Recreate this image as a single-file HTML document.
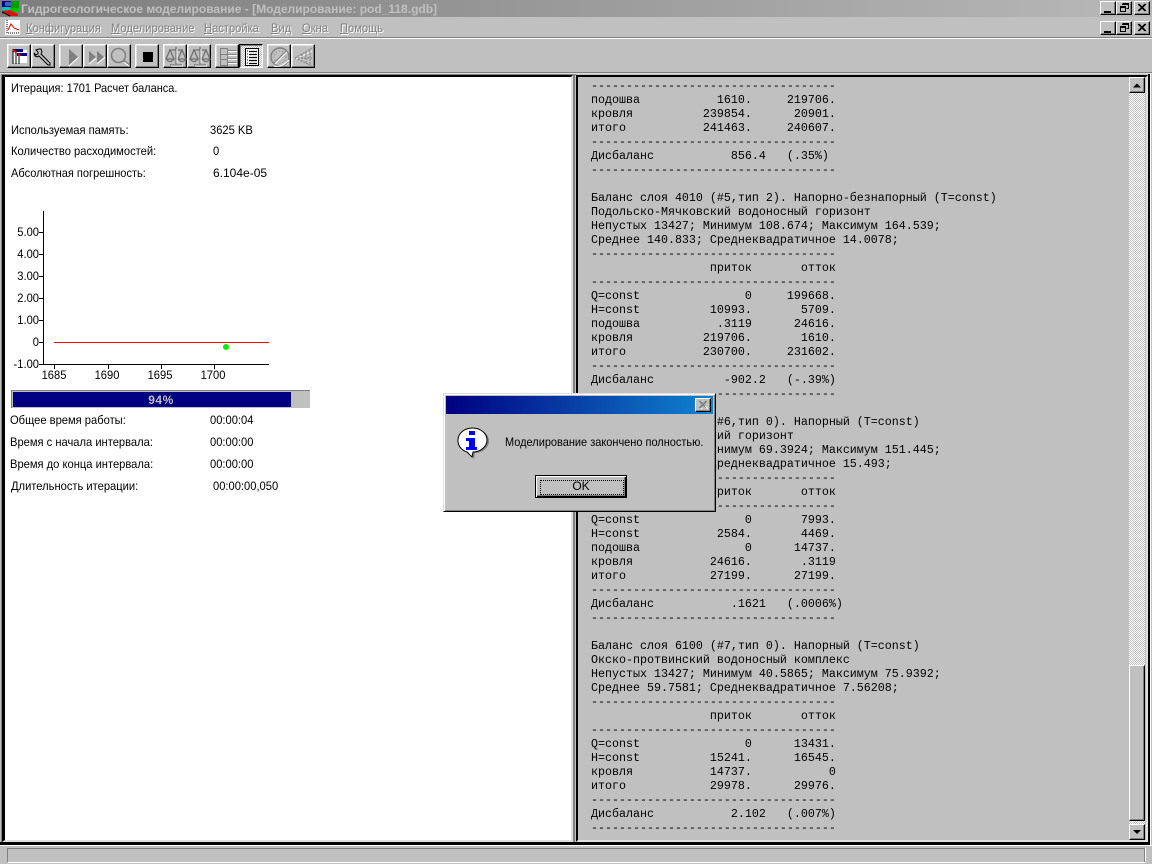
<!DOCTYPE html>
<html><head><meta charset="utf-8"><style>
html,body{margin:0;padding:0;width:1152px;height:864px;overflow:hidden;background:#c0c0c0}
div,pre,svg,span.a{position:absolute}
.s{font:12px/14px "Liberation Sans",sans-serif;color:#000;white-space:nowrap;transform:scaleX(.93);transform-origin:0 0}
pre{margin:0;left:591px;top:79px;font:11.67px/14px "Liberation Mono",monospace;color:#000}
.m{font:12px/14px "Liberation Sans",sans-serif;color:#808080;text-shadow:1px 1px 0 #fff;top:21px;white-space:nowrap;transform:scaleX(.93);transform-origin:0 0}
.b{top:44px;width:24px;height:24px;box-sizing:border-box;background:#c0c0c0;border:1px solid;border-color:#fff #000 #000 #fff;box-shadow:inset -1px -1px 0 #808080,inset 1px 1px 0 #dfdfdf}
.b svg{left:1px;top:1px}
.w{width:16px;height:14px;box-sizing:border-box;background:#c0c0c0;border:1px solid;border-color:#fff #000 #000 #fff;box-shadow:inset -1px -1px 0 #808080}
.w svg{left:0;top:0}
.l{left:39px;width:4px;height:1px;background:#000}
.y{font:12px/14px "Liberation Sans",sans-serif;width:30px;text-align:right;left:9px;transform:scaleX(.93);transform-origin:100% 0}
.x{font:12px/14px "Liberation Sans",sans-serif;top:368px;width:40px;text-align:center;transform:scaleX(.93)}
u{text-decoration:underline}
</style></head><body>

<!-- title bar -->
<div style="left:0;top:0;width:1152px;height:17px;background:linear-gradient(90deg,#7d7d7d,#b8b8b8)"></div>
<svg style="left:2px;top:1px" width="17" height="16" viewBox="0 0 17 16">
<rect x="0" y="0" width="17" height="6" fill="#000080"/><rect x="9" y="0" width="8" height="8" fill="#00a000"/><rect x="3" y="1" width="6" height="4" fill="#4060c0"/><rect x="0" y="6" width="8" height="5" fill="#00c0c0"/><rect x="8" y="7" width="9" height="4" fill="#00c000"/><path d="M0 10 L8 9 L16 13 L16 15 L8 15 L0 12Z" fill="#e01010"/><path d="M0 11 L8 15" stroke="#000" fill="none"/>
</svg>
<div style="left:21px;top:2px;font:bold 12px/15px 'Liberation Sans',sans-serif;color:#c0c0c0;white-space:nowrap">Гидрогеологическое моделирование - [Моделирование: pod_118.gdb]</div>
<div class="w" style="left:1100px;top:1px"><svg width="14" height="12"><rect x="3" y="9" width="7" height="2"/></svg></div>
<div class="w" style="left:1116px;top:1px"><svg width="14" height="12"><path d="M5.5 1.5h6v5h-2M5 2.5h6M3.5 4.5h5v5h-5zM3 5.5h6" fill="none" stroke="#000"/></svg></div>
<div class="w" style="left:1134px;top:1px"><svg width="14" height="12"><path d="M3 2L10 9M4 2L11 9M10 2L3 9M11 2L4 9" stroke="#000"/></svg></div>

<!-- menu -->
<svg style="left:5px;top:20px" width="15" height="15" viewBox="0 0 15 15"><rect width="15" height="15" fill="#fff"/><path d="M2 0V13H15" stroke="#000" fill="none" stroke-dasharray="1 1"/><path d="M3 10 L6 4 L9 8 L14 10" stroke="#e00000" fill="none"/></svg>
<div class="m" style="left:26px"><u>К</u>онфигурация</div>
<div class="m" style="left:111px"><u>М</u>оделирование</div>
<div class="m" style="left:204px"><u>Н</u>астройка</div>
<div class="m" style="left:271px"><u>В</u>ид</div>
<div class="m" style="left:302px"><u>О</u>кна</div>
<div class="m" style="left:340px"><u>П</u>омощь</div>
<div class="w" style="left:1100px;top:21px"><svg width="14" height="12"><rect x="3" y="9" width="7" height="2"/></svg></div>
<div class="w" style="left:1116px;top:21px"><svg width="14" height="12"><path d="M5.5 1.5h6v5h-2M5 2.5h6M3.5 4.5h5v5h-5zM3 5.5h6" fill="none" stroke="#000"/></svg></div>
<div class="w" style="left:1134px;top:21px"><svg width="14" height="12"><path d="M3 2L10 9M4 2L11 9M10 2L3 9M11 2L4 9" stroke="#000"/></svg></div>
<div style="left:0;top:37px;width:1152px;height:1px;background:#808080"></div>
<div style="left:0;top:38px;width:1152px;height:1px;background:#fff"></div>

<!-- toolbar -->
<div class="b" style="left:7px"><svg width="22" height="22" viewBox="0 0 22 22"><rect x="4" y="4" width="14" height="13" fill="#fff"/><rect x="4" y="3" width="10" height="3" fill="#000080"/><rect x="8" y="7" width="10" height="3" fill="#000080"/><path d="M4 3v15M7 3v15M10 9v9" stroke="#000"/><path d="M4 4l3 2M9 8l2 2" stroke="#f00" stroke-width="2"/></svg></div>
<div class="b" style="left:31px"><svg width="22" height="22" viewBox="0 0 22 22"><path d="M3 4l3-1 2 0 1 3-1 2 9 9 0 2-2 0-9-9-2 1-2-1-1-3 2 2 2-1 0-2z" fill="#c0c0c0" stroke="#000"/></svg></div>
<div class="b" style="left:59px"><svg width="22" height="22" viewBox="0 0 22 22"><path d="M8 3L17 11L8 19Z" fill="#808080"/><path d="M8 20L18 11" stroke="#fff"/></svg></div>
<div class="b" style="left:83px"><svg width="22" height="22" viewBox="0 0 22 22"><path d="M4 5L11 11L4 17ZM12 5L19 11L12 17Z" fill="#808080"/><path d="M4 18L11 12M12 18L20 11" stroke="#fff"/></svg></div>
<div class="b" style="left:107px"><svg width="22" height="22" viewBox="0 0 22 22"><circle cx="9.500" cy="9.500" r="7" fill="none" stroke="#808080" stroke-width="1.500"/><path d="M14 14L20 19" stroke="#808080" stroke-width="2"/><path d="M15 16L20 20" stroke="#fff"/></svg></div>
<div class="b" style="left:135px"><svg width="22" height="22"><rect x="6" y="6" width="10" height="10"/></svg></div>
<div class="b" style="left:163px"><svg width="22" height="22" viewBox="0 0 22 22"><path d="M11 1V18M5 19H17M4 4H18M5 4L1 13H9L5 4M17 4L13 13H21L17 4M1 13Q5 18 9 13M13 13Q17 18 21 13" fill="none" stroke="#707070" stroke-width="1.300"/><path d="M12 3V17M6 20H18" stroke="#fff"/></svg></div>
<div class="b" style="left:187px"><svg width="22" height="22" viewBox="0 0 22 22"><path d="M11 1V18M5 19H17M4 4H18M5 4L1 13H9L5 4M17 4L13 13H21L17 4M1 13Q5 18 9 13M13 13Q17 18 21 13" fill="none" stroke="#707070" stroke-width="1.300"/><path d="M12 3V17M6 20H18" stroke="#fff"/></svg></div>
<div class="b" style="left:215px"><svg width="22" height="22" viewBox="0 0 22 22"><path d="M3.500 2.500h7v17h-7zM10.500 4.500h9M10.500 8.500h9M10.500 12.500h9M10.500 16.500h9M3.500 8.500h7M3.500 13.500h7" fill="none" stroke="#808080"/><path d="M11 5.500h9M11 9.500h9M11 13.500h9M11 17.500h9" stroke="#fff"/></svg></div>
<div style="left:239px;top:44px;width:24px;height:24px;box-sizing:border-box;border:1px solid;border-color:#000 #fff #fff #000;box-shadow:inset 1px 1px 0 #808080;background:repeating-conic-gradient(#fff 0 25%,#c0c0c0 0 50%) 0 0/2px 2px"><svg style="left:1px;top:1px" width="22" height="22" viewBox="0 0 22 22"><rect x="4.500" y="2.500" width="13" height="17" fill="#fff" stroke="#000"/><path d="M6 5h1M6 8h1M6 11h1M6 14h1M6 17h1" stroke="#000"/><path d="M8 5.500h8M8 8.500h8M8 11.500h8M8 14.500h8M8 17.500h8" stroke="#000" stroke-width="1.200"/></svg></div>
<div class="b" style="left:267px"><svg width="22" height="22" viewBox="0 0 22 22"><circle cx="11" cy="11" r="9" fill="none" stroke="#808080" stroke-width="1.500"/><circle cx="11" cy="11" r="6" fill="none" stroke="#808080" stroke-dasharray="1 2"/><path d="M5 17L17 5" stroke="#808080"/><path d="M6 18L18 6M5 20Q13 22 20 14" stroke="#fff" fill="none"/></svg></div>
<div class="b" style="left:291px"><svg width="22" height="22" viewBox="0 0 22 22"><path d="M2 12L19 2M2 12L19 20M2 12H19M9 8V15M13 6V17M17 4V19" fill="none" stroke="#808080" stroke-dasharray="2 1"/><path d="M3 13L19 5" stroke="#fff" stroke-dasharray="2 2"/></svg></div>

<!-- frames -->
<div style="left:0;top:72px;width:1152px;height:1px;background:#808080"></div>
<div style="left:0;top:73px;width:1152px;height:1px;background:#dfdfdf"></div>
<div style="left:2px;top:75px;width:571px;height:767px;box-sizing:border-box;background:#fff;border:2px solid;border-color:#000 #dfdfdf #dfdfdf #000;border-left-width:3px"></div>
<div style="left:1px;top:74px;width:1px;height:770px;background:#808080"></div>
<div style="left:1px;top:74px;width:575px;height:1px;background:#808080"></div>
<div style="left:573px;top:75px;width:2px;height:769px;background:#808080"></div>
<div style="left:576px;top:75px;width:572px;height:767px;box-sizing:border-box;background:#c0c0c0;border:2px solid;border-color:#000 #dfdfdf #dfdfdf #000"></div>
<div style="left:0;top:842px;width:1150px;height:3px;background:#000"></div>
<div style="left:1148px;top:74px;width:2px;height:770px;background:#000"></div>
<div style="left:0;top:845px;width:1152px;height:1px;background:#fff"></div>
<div style="left:1150px;top:74px;width:1px;height:772px;background:#fff"></div>

<!-- left text -->
<div class="s" style="left:11px;top:81px;transform:scaleX(.915)">Итерация: 1701 Расчет баланса.</div>
<div class="s" style="left:11px;top:123px">Используемая память:</div><div class="s" style="left:210px;top:123px">3625 KB</div>
<div class="s" style="left:11px;top:144px">Количество расходимостей:</div><div class="s" style="left:213px;top:144px">0</div>
<div class="s" style="left:11px;top:166px;transform:scaleX(.92)">Абсолютная погрешность:</div><div class="s" style="left:213px;top:166px;transform:none">6.104e-05</div>

<!-- chart -->
<div style="left:43px;top:211px;width:1px;height:154px;background:#000"></div>
<div style="left:43px;top:364px;width:226px;height:1px;background:#000"></div>
<div class="l" style="top:232px"></div><div class="l" style="top:254px"></div><div class="l" style="top:276px"></div><div class="l" style="top:298px"></div><div class="l" style="top:320px"></div><div class="l" style="top:342px"></div><div class="l" style="top:364px"></div>
<div class="y" style="top:225px">5.00</div><div class="y" style="top:247px">4.00</div><div class="y" style="top:269px">3.00</div><div class="y" style="top:291px">2.00</div><div class="y" style="top:313px">1.00</div><div class="y" style="top:335px">0</div><div class="y" style="top:357px">-1.00</div>
<div style="left:54px;top:365px;width:1px;height:4px;background:#000"></div><div style="left:108px;top:365px;width:1px;height:4px;background:#000"></div><div style="left:161px;top:365px;width:1px;height:4px;background:#000"></div><div style="left:214px;top:365px;width:1px;height:4px;background:#000"></div>
<div class="x" style="left:34px">1685</div><div class="x" style="left:87px">1690</div><div class="x" style="left:140px">1695</div><div class="x" style="left:193px">1700</div>
<div style="left:54px;top:342px;width:215px;height:1px;background:#f00"></div>
<div style="left:223px;top:344px;width:6px;height:6px;border-radius:50%;background:#00f000"></div>

<!-- progress -->
<div style="left:11px;top:390px;width:299px;height:18px;box-sizing:border-box;background:#c0c0c0;border-top:1px solid #808080;border-left:1px solid #808080"></div>
<div style="left:13px;top:392px;width:278px;height:15px;background:#000080"></div>
<div style="left:11px;top:393px;width:300px;text-align:center;font:bold 12px/15px 'Liberation Sans',sans-serif;color:#c0c0c0;letter-spacing:.5px">94%</div>

<div class="s" style="left:10px;top:413px">Общее время работы:</div><div class="s" style="left:210px;top:413px">00:00:04</div>
<div class="s" style="left:10px;top:435px">Время с начала интервала:</div><div class="s" style="left:210px;top:435px">00:00:00</div>
<div class="s" style="left:10px;top:457px">Время до конца интервала:</div><div class="s" style="left:210px;top:457px">00:00:00</div>
<div class="s" style="left:11px;top:479px">Длительность итерации:</div><div class="s" style="left:213px;top:479px">00:00:00,050</div>

<!-- right text -->
<pre>-----------------------------------
подошва           1610.     219706.
кровля          239854.      20901.
итого           241463.     240607.
-----------------------------------
Дисбаланс           856.4   (.35%)
-----------------------------------

Баланс слоя 4010 (#5,тип 2). Напорно-безнапорный (T=const)
Подольско-Мячковский водоносный горизонт
Непустых 13427; Минимум 108.674; Максимум 164.539;
Среднее 140.833; Среднеквадратичное 14.0078;
-----------------------------------
                 приток       отток
-----------------------------------
Q=const               0     199668.
H=const          10993.       5709.
подошва           .3119      24616.
кровля          219706.       1610.
итого           230700.     231602.
-----------------------------------
Дисбаланс          -902.2   (-.39%)
-----------------------------------

Баланс слоя 5010 (#6,тип 0). Напорный (T=const)
Михайловско-тульский горизонт
Непустых 13427; Минимум 69.3924; Максимум 151.445;
Среднее 126.254; Среднеквадратичное 15.493;
-----------------------------------
                 приток       отток
-----------------------------------
Q=const               0       7993.
H=const           2584.       4469.
подошва               0      14737.
кровля           24616.       .3119
итого            27199.      27199.
-----------------------------------
Дисбаланс           .1621   (.0006%)
-----------------------------------

Баланс слоя 6100 (#7,тип 0). Напорный (T=const)
Окско-протвинский водоносный комплекс
Непустых 13427; Минимум 40.5865; Максимум 75.9392;
Среднее 59.7581; Среднеквадратичное 7.56208;
-----------------------------------
                 приток       отток
-----------------------------------
Q=const               0      13431.
H=const          15241.      16545.
кровля           14737.           0
итого            29978.      29976.
-----------------------------------
Дисбаланс           2.102   (.007%)
-----------------------------------</pre>

<!-- scrollbar -->
<div style="left:1129px;top:77px;width:16px;height:763px;background:repeating-conic-gradient(#fff 0 25%,#c0c0c0 0 50%) 0 0/2px 2px"></div>
<div class="w" style="left:1129px;top:77px;width:16px;height:16px"><svg width="14" height="14"><path d="M3 9.500H11L7 5.500Z" fill="#000"/></svg></div>
<div class="w" style="left:1129px;top:665px;width:16px;height:156px"></div>
<div class="w" style="left:1129px;top:824px;width:16px;height:16px"><svg width="14" height="14"><path d="M3 5H11L7 9Z" fill="#000"/></svg></div>

<!-- status bar -->
<div style="left:7px;top:848px;width:1137px;border-top:1px solid #808080;border-left:1px solid #808080;border-bottom:1px solid #fff;height:13px"></div>
<div style="left:1144px;top:848px;width:1px;height:14px;background:#808080"></div>
<div style="left:1145px;top:848px;width:1px;height:14px;background:#fff"></div>

<!-- dialog -->
<div style="left:443px;top:393px;width:273px;height:119px;box-sizing:border-box;background:#c0c0c0;border:1px solid;border-color:#dfdfdf #000 #000 #dfdfdf;box-shadow:inset 1px 1px 0 #fff,inset -1px -1px 0 #808080"></div>
<div style="left:446px;top:396px;width:267px;height:18px;background:linear-gradient(90deg,#000080,#1084d0)"></div>
<div class="w" style="left:695px;top:398px"><svg width="14" height="12"><path d="M3 2L10 9M4 2L11 9M10 2L3 9M11 2L4 9" stroke="#808080"/><path d="M5 10L6 9M12 10L9 7" stroke="#fff"/></svg></div>
<svg style="left:456px;top:427px" width="36" height="34" viewBox="0 0 36 34">
<path d="M4 14a14.500 12 0 0 1 29 0a14.500 12 0 0 1-14 12L18 32L13 26A14 12 0 0 1 4 14Z" fill="#808080"/>
<path d="M2 13a14.500 12 0 0 1 29 0a14.500 12 0 0 1-14 12L16 30L11 25A14 12 0 0 1 2 13Z" fill="#fff" stroke="#000"/>
<rect x="13" y="4" width="6" height="4" fill="#0000ff"/><path d="M10 11h9v9h2v3h-11v-3h3v-6h-3z" fill="#0000ff"/>
</svg>
<div style="left:505px;top:435px;font:12px/14px 'Liberation Sans',sans-serif;white-space:nowrap;transform:scaleX(.915);transform-origin:0 0">Моделирование закончено полностью.</div>
<div style="left:535px;top:475px;width:92px;height:23px;box-sizing:border-box;background:#c0c0c0;border:1px solid #000;box-shadow:inset 1px 1px 0 #fff,inset -1px -1px 0 #000,inset -2px -2px 0 #808080;text-align:center;font:12px/21px 'Liberation Sans',sans-serif">OK
<div style="left:4px;top:4px;width:82px;height:13px;border:1px dotted #000"></div></div>
</body></html>
